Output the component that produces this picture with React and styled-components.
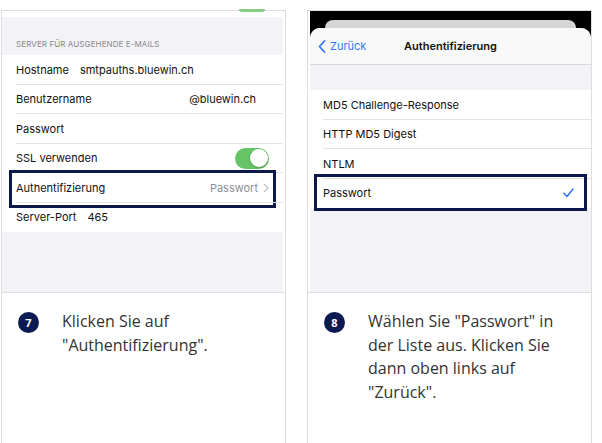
import React from "react";
import styled, { createGlobalStyle } from "styled-components";

const GlobalStyle = createGlobalStyle`
  html, body {
    margin: 0;
    padding: 0;
    background: #fff;
  }
  body {
    font-family: Inter, "Liberation Sans", sans-serif;
  }
`;

const Page = styled.div`
  display: flex;
  gap: 21px;
  padding: 10px 0 0 1px;
  height: 443px;
  box-sizing: border-box;
  overflow: hidden;
`;

const Card = styled.div`
  width: 285px;
  height: 450px;
  box-sizing: border-box;
  border: 1px solid #dedede;
  display: flex;
  flex-direction: column;
`;

const Shot = styled.div`
  position: relative;
  height: 281px;
  flex-shrink: 0;
  margin: ${(p) => (p.$side === "left" ? "0 2px 0 0" : "0 0 0 2px")};
  background: #f2f2f7;
  display: flex;
  flex-direction: column;
  font-family: Inter, "Liberation Sans", sans-serif;
  font-size: 11px;
  color: #111;
`;

const Divider = styled.div`
  height: 1px;
  background: #dedede;
  flex-shrink: 0;
`;

const TopStrip = styled.div`
  position: relative;
  height: 6px;
  background: #fff;
`;

const ToggleEdge = styled.div`
  position: absolute;
  top: -2px;
  left: 237px;
  width: 26px;
  height: 3px;
  border-radius: 0 0 13px 13px;
  background: #86cc82;
`;

const GroupHeader = styled.div`
  height: 38px;
  box-sizing: border-box;
  display: flex;
  align-items: flex-end;
  padding: 0 14px 6px;
  font-size: 8px;
  letter-spacing: 0.1px;
  color: #8a8a8e;
  text-transform: uppercase;
`;

const List = styled.div`
  background: #fff;
  display: flex;
  flex-direction: column;
`;

const Row = styled.div`
  position: relative;
  height: 29.5px;
  display: flex;
  align-items: center;
  padding-left: ${(p) => p.$inset || 14}px;
  padding-right: ${(p) => p.$right || 14}px;
  &:not(:last-child)::after {
    content: "";
    position: absolute;
    left: ${(p) => p.$inset || 14}px;
    right: 0;
    bottom: 0;
    height: 1px;
    background: #e3e3e6;
  }
`;

const Label = styled.span`
  flex-shrink: 0;
  margin-right: ${(p) => p.$gap || 0}px;
`;

const Value = styled.span`
  color: ${(p) => (p.$muted ? "#8e8e93" : "#111")};
  margin-left: ${(p) => (p.$end ? "auto" : "0")};
`;

const Toggle = styled.div`
  margin-left: auto;
  width: 34px;
  height: 21px;
  border-radius: 11px;
  background: #65c466;
  position: relative;
  &::after {
    content: "";
    position: absolute;
    right: 1.5px;
    top: 1.5px;
    width: 18px;
    height: 18px;
    border-radius: 50%;
    background: #fff;
    box-shadow: 0 1px 2px rgba(0, 0, 0, 0.25);
  }
`;

const Highlight = styled.div`
  position: absolute;
  top: ${(p) => p.$top}px;
  bottom: ${(p) => p.$bottom}px;
  left: ${(p) => p.$left}px;
  right: ${(p) => p.$right}px;
  border: 3px solid #0c1849;
  pointer-events: none;
`;

const Filler = styled.div`
  flex: 1;
`;

const Dark = styled.div`
  background: #000;
  padding-top: 9px;
  display: flex;
  flex-direction: column;
  flex: 1;
`;

const BackSheet = styled.div`
  height: 8px;
  margin: 0 15px;
  border-radius: 9px 9px 0 0;
  background: #d6d6d8;
`;

const Sheet = styled.div`
  flex: 1;
  background: #f2f2f7;
  border-radius: 10px 10px 0 0;
  overflow: hidden;
  display: flex;
  flex-direction: column;
`;

const NavBar = styled.div`
  height: 37px;
  box-sizing: border-box;
  background: #f9f9f9;
  border-bottom: 1px solid #d9d9dc;
  display: grid;
  grid-template-columns: 1fr auto 1fr;
  align-items: center;
  padding: 0 8px;
`;

const Back = styled.div`
  display: flex;
  align-items: center;
  gap: 4px;
  color: #3478f6;
  font-size: 11px;
`;

const Title = styled.div`
  font-weight: 600;
  font-size: 11px;
  color: #111;
`;

const Band = styled.div`
  height: 25px;
`;

const Caption = styled.div`
  display: flex;
  align-items: flex-start;
  gap: 23px;
  padding: 17px 14px 0 16px;
`;

const Badge = styled.div`
  flex-shrink: 0;
  width: 21px;
  height: 21px;
  margin-top: 1.5px;
  border-radius: 50%;
  background: #0b1a52;
  color: #fff;
  font-family: "Open Sans", "Liberation Sans", sans-serif;
  font-size: 11px;
  font-weight: 700;
  display: flex;
  align-items: center;
  justify-content: center;
`;

const Text = styled.p`
  margin: 0;
  font-family: "Open Sans", "Liberation Sans", sans-serif;
  font-size: 16px;
  line-height: 23.7px;
  color: #333;
`;

const Chevron = () => (
  <svg width="6" height="10" viewBox="0 0 6 10" style={{ marginLeft: 5 }}>
    <path d="M1 1l4 4-4 4" fill="none" stroke="#c2c2c6" strokeWidth="1.3" />
  </svg>
);

const BackChevron = () => (
  <svg width="8" height="13" viewBox="0 0 8 13">
    <path d="M6.5 1L1.5 6.5l5 5.5" fill="none" stroke="#3478f6" strokeWidth="1.8" strokeLinecap="round" strokeLinejoin="round" />
  </svg>
);

const Check = () => (
  <svg width="11" height="10" viewBox="0 0 11 10" style={{ marginLeft: "auto" }}>
    <path d="M1 5.2l3 3.3L10 1" fill="none" stroke="#3478f6" strokeWidth="1.6" strokeLinecap="round" strokeLinejoin="round" />
  </svg>
);

const OutgoingServer = () => (
  <Shot $side="left">
    <TopStrip>
      <ToggleEdge />
    </TopStrip>
    <GroupHeader>Server für ausgehende E-Mails</GroupHeader>
    <List>
      <Row>
        <Label $gap={11}>Hostname</Label>
        <Value>smtpauths.bluewin.ch</Value>
      </Row>
      <Row $right={27}>
        <Label>Benutzername</Label>
        <Value $end>@bluewin.ch</Value>
      </Row>
      <Row>
        <Label>Passwort</Label>
      </Row>
      <Row>
        <Label>SSL verwenden</Label>
        <Toggle />
      </Row>
      <Row>
        <Label>Authentifizierung</Label>
        <Value $muted $end>Passwort</Value>
        <Chevron />
        <Highlight $top={-3} $bottom={-5} $left={7} $right={7} />
      </Row>
      <Row>
        <Label $gap={11}>Server-Port</Label>
        <Value>465</Value>
      </Row>
    </List>
    <Filler />
  </Shot>
);

const AuthChoice = () => (
  <Shot $side="right">
    <Dark>
      <BackSheet />
      <Sheet>
        <NavBar>
          <Back>
            <BackChevron />
            Zurück
          </Back>
          <Title>Authentifizierung</Title>
          <span />
        </NavBar>
        <Band />
        <List>
          <Row $inset={13}>MD5 Challenge-Response</Row>
          <Row $inset={13}>HTTP MD5 Digest</Row>
          <Row $inset={13}>NTLM</Row>
          <Row $inset={13} $right={17}>
            Passwort
            <Check />
            <Highlight $top={-5} $bottom={-3} $left={4} $right={4} />
          </Row>
        </List>
        <Filler />
      </Sheet>
    </Dark>
  </Shot>
);

const steps = [
  { n: 7, text: 'Klicken Sie auf "Authentifizierung".', shot: <OutgoingServer /> },
  { n: 8, text: 'Wählen Sie "Passwort" in der Liste aus. Klicken Sie dann oben links auf "Zurück".', shot: <AuthChoice /> },
];

export default function App() {
  return (
    <>
      <GlobalStyle />
      <Page>
        {steps.map((s) => (
          <Card key={s.n}>
            {s.shot}
            <Divider />
            <Caption>
              <Badge>{s.n}</Badge>
              <Text>{s.text}</Text>
            </Caption>
          </Card>
        ))}
      </Page>
    </>
  );
}
